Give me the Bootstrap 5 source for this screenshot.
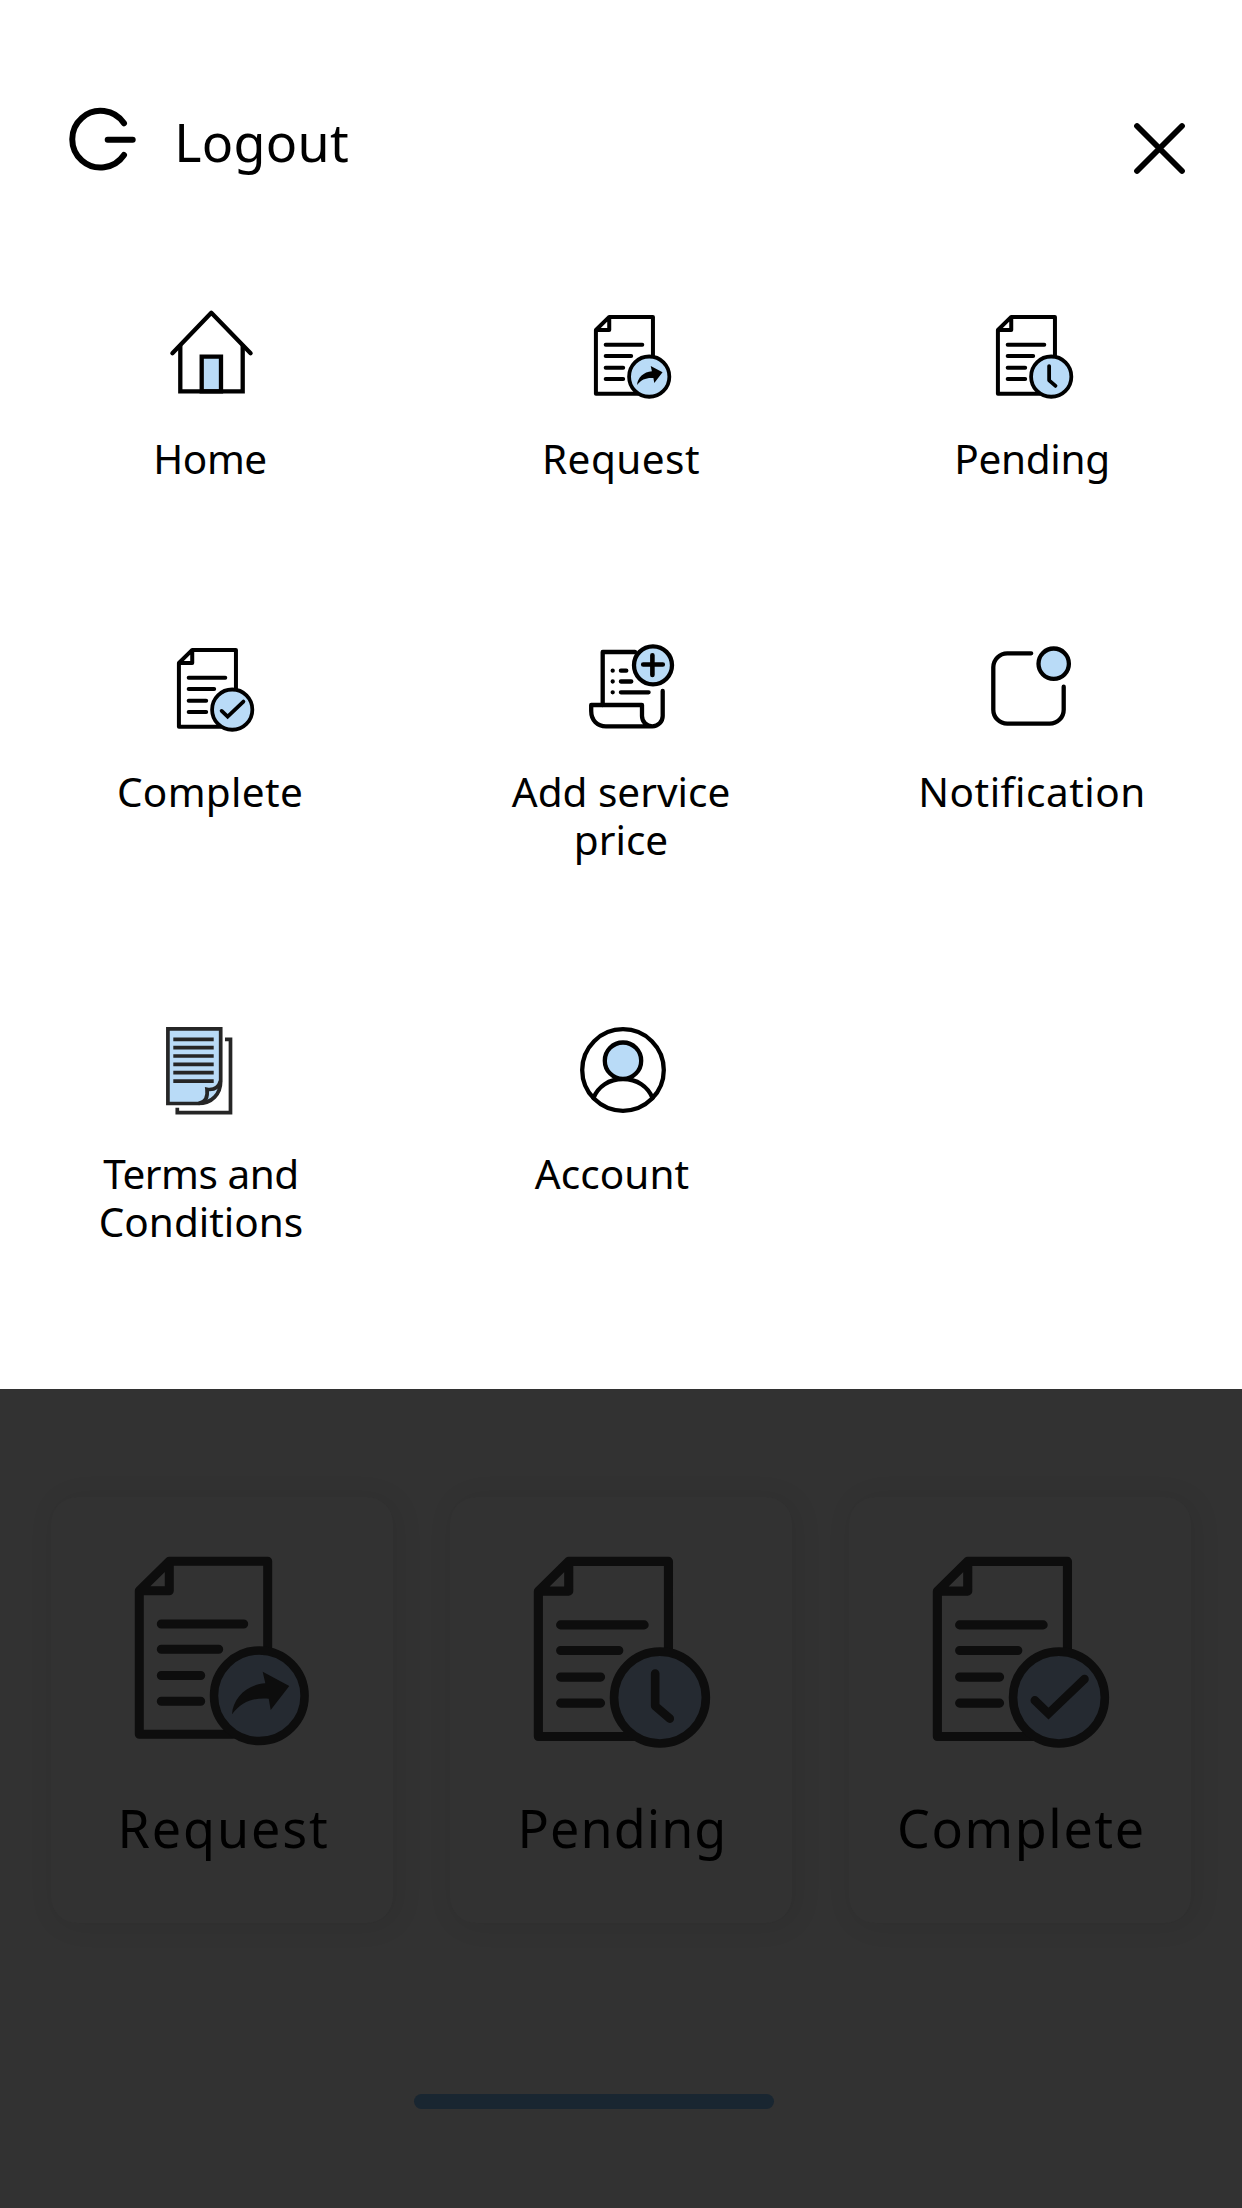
<!DOCTYPE html>
<html lang="en">
<head>
<meta charset="utf-8">
<meta name="viewport" content="width=device-width, initial-scale=1">
<title>Menu</title>
<link rel="stylesheet" href="https://cdn.jsdelivr.net/npm/bootstrap@5.3.0/dist/css/bootstrap.min.css">
<style>
  body { font-family: "Noto Sans", "Open Sans", sans-serif; color: #000; background: #323232; height: 2208px; overflow: hidden; }
  svg { display: block; overflow: visible; fill: none; stroke: #000; stroke-width: 4.3; stroke-linecap: round; stroke-linejoin: round; }
  .tint { fill: #b9dbf7; }

  .menu-panel { height: 1389px; }
  .menu-head { height: 306px; padding: 108px 57px 0 69.5px; }
  .logout-link { gap: 38.7px; color: #000; }
  .logout-text { font-size: 52px; line-height: 60px; margin-top: 3.5px; letter-spacing: .3px; }
  .close-btn { margin-top: 14.7px; }

  .menu-grid { padding: 0 4.5px; }
  .tile { color: #000; }
  .tile-icon { height: 128.7px; }
  .tile-text { font-size: 40.5px; line-height: 48px; margin-bottom: 156.8px; }
  .row-last .tile-text { padding-right: 18px; }
  .i-home { padding: 4.2px 0 0 165.5px; }
  .i-request { padding: 8.7px 0 0 178.5px; }
  .i-pending { padding: 8.7px 0 0 169.5px; }
  .i-complete { padding: 8.7px 0 0 172.5px; }
  .i-service { padding: 4.8px 0 0 173.8px; }
  .i-notify { padding: 6.2px 0 0 164.2px; }
  .i-terms { padding: 6.4px 0 0 161.8px; }
  .i-account { padding: 6.4px 0 0 164.5px; }
  .t-home { letter-spacing: -.4px; }
  .t-request { letter-spacing: .46px; }
  .t-pending { letter-spacing: -.29px; }
  .t-complete { letter-spacing: .32px; }
  .t-notify { letter-spacing: .5px; }
  .t-terms { letter-spacing: -.47px; }
  .t-account { letter-spacing: .11px; }

  .dash { height: 819px; padding: 108px 50px 0 51px; }
  .dash-cards { gap: 56.7px; }
  .dash-card { width: 342.2px; height: 426px; border-radius: 26px; background: #323232; padding-top: 60px; box-shadow: 4px 2px 26px 2px rgba(0,0,0,.08); }
  .dash-icon { height: 241px; padding-left: 84.2px; }
  .dash-icon svg { stroke: #0d0d0d; }
  .dash-icon .tint { fill: #252a31; }
  .dash-text { font-size: 52px; line-height: 60px; padding-left: 3px; }
  .d-req { letter-spacing: 1.9px; }
  .d-pen { letter-spacing: 1.05px; }
  .d-com { letter-spacing: 1.6px; }
  .dash-bar { width: 360px; height: 15px; border-radius: 8px; background: #192631; margin: 171px 0 0 363px; }
</style>
<script src="https://cdn.jsdelivr.net/npm/bootstrap@5.3.0/dist/js/bootstrap.bundle.min.js"></script>
</head>
<body>

<!-- sheet of paper shared by the request, pending and complete icons -->
<svg width="0" height="0" class="position-absolute" aria-hidden="true">
  <symbol id="sheet" viewBox="0 0 174 189" overflow="visible">
    <g stroke-width="9">
      <path d="M98 177.2H4.3V33.7L34.3 4.3H132.7V98M34.3 4.3V33.7H4.3"/>
      <path d="M26.3 67H108.7M26.3 92.3H83.7M26.3 118.5H65.7M26.3 144.2H65.7"/>
    </g>
  </symbol>
</svg>

<nav class="menu-panel bg-white">
  <div class="menu-head d-flex justify-content-between align-items-start">
    <a href="#" class="logout-link d-flex align-items-start text-decoration-none">
      <svg width="66" height="63" viewBox="0 0 66 63"><g stroke-width="6"><path d="M54 15.3A28.3 28.3 0 1 0 54 47"/><path d="M37.7 31.8H62.7"/></g></svg>
      <span class="logout-text">Logout</span>
    </a>
    <a href="#" class="close-btn" aria-label="Close">
      <svg width="51" height="51" viewBox="0 0 51 51"><g stroke-width="5.8"><path d="M3 3L48 48M48 3L3 48"/></g></svg>
    </a>
  </div>

  <div class="menu-grid">
    <div class="row g-0">
      <a href="#" class="tile col-4 text-decoration-none">
        <div class="tile-icon i-home">
          <svg width="83" height="84" viewBox="0 0 83 84"><path class="tint" stroke-linejoin="miter" d="M31.7 81.3V46.7H51V81.3Z"/><path stroke-linejoin="miter" d="M10.3 36V81.3H72.7V36"/><path d="M2.4 43.3L41.3 2.8L80.6 43.3"/></svg>
        </div>
        <div class="tile-text t-home text-center">Home</div>
      </a>
      <a href="#" class="tile col-4 text-decoration-none">
        <div class="tile-icon i-request">
          <svg width="77.3" height="84" viewBox="0 0 174 189"><use href="#sheet" width="174" height="189"/><g stroke-width="8.5"><circle class="tint" cx="124.3" cy="138.7" r="45.3"/></g><path fill="#000" stroke="none" d="M154.3 129L127.7 114.7L130.3 126.3C112 127.5 98 141 97 157.3C107 144.5 118 140.5 133.7 141.7L135.7 153Z"/></svg>
        </div>
        <div class="tile-text t-request text-center">Request</div>
      </a>
      <a href="#" class="tile col-4 text-decoration-none">
        <div class="tile-icon i-pending">
          <svg width="77.3" height="84" viewBox="0 0 174 189"><use href="#sheet" width="174" height="189"/><g stroke-width="8.5"><circle class="tint" cx="124.3" cy="138.7" r="45.3"/><path d="M119.6 115V147L134 159.5"/></g></svg>
        </div>
        <div class="tile-text t-pending text-center">Pending</div>
      </a>
    </div>

    <div class="row g-0">
      <a href="#" class="tile col-4 text-decoration-none">
        <div class="tile-icon i-complete">
          <svg width="77.3" height="84" viewBox="0 0 174 189"><use href="#sheet" width="174" height="189"/><g stroke-width="8.5"><circle class="tint" cx="124.3" cy="138.7" r="45.3"/><path stroke-linejoin="miter" d="M100.5 141.5L114 154.5L149.5 120.5"/></g></svg>
        </div>
        <div class="tile-text t-complete text-center">Complete</div>
      </a>
      <a href="#" class="tile col-4 text-decoration-none">
        <div class="tile-icon i-service">
          <svg width="85.3" height="85" viewBox="0 0 85.3 85"><path d="M46 8H13.7V61"/><path d="M73.7 47V72A10.35 10.35 0 0 1 53 72V61H2.2V67C2.2 76.5 8.5 82.3 17 82.3H63"/><path d="M31.9 26.7H37.3M31.9 37.5H42.3M31.9 48.3H59.6M23.7 26.7h.01M23.7 37.5h.01M23.7 48.3h.01"/><circle class="tint" cx="64" cy="21.3" r="19"/><g stroke-width="4.6"><path d="M54.2 20.5H73.8M63.4 11.3V31"/></g></svg>
        </div>
        <div class="tile-text text-center">Add service<br>price</div>
      </a>
      <a href="#" class="tile col-4 text-decoration-none">
        <div class="tile-icon i-notify">
          <svg width="80.3" height="80.3" viewBox="0 0 80.3 80.3"><path d="M40.2 7.3H16.3A14 14 0 0 0 2.3 21.3V63.7A14 14 0 0 0 16.3 77.7H58.7A14 14 0 0 0 72.7 63.7V40.7"/><circle class="tint" cx="62.7" cy="17.7" r="15.2"/></svg>
        </div>
        <div class="tile-text t-notify text-center">Notification</div>
      </a>
    </div>

    <div class="row g-0 row-last">
      <a href="#" class="tile col-4 text-decoration-none">
        <div class="tile-icon i-terms">
          <svg width="66.3" height="87.7" viewBox="0 0 66.3 87.7"><g stroke="#262626" stroke-width="3.7" stroke-linecap="butt" stroke-linejoin="miter"><path d="M59 12.3H64.5V85.7H11.3V80.7"/><path class="tint" d="M1.9 1.9H54.7V54C54.7 67 46 76.5 32 76.5H1.9Z"/><path d="M54.5 54C52.5 60.5 48 63.3 41 62.3C42 70 39.5 75.5 32.5 76.5"/><path d="M7.3 12.3H47.7M7.3 20.7H47.7M7.3 29H47.7M7.3 37.4H47.7M7.3 45.7H47.7M7.3 54.1H47.7"/></g></svg>
        </div>
        <div class="tile-text text-center"><span class="t-terms">Terms and</span><br>Conditions</div>
      </a>
      <a href="#" class="tile col-4 text-decoration-none">
        <div class="tile-icon i-account">
          <svg width="86" height="86" viewBox="0 0 86 86"><circle cx="43" cy="43" r="40.8"/><path d="M13.5 71C18 59.5 29 52 43 52S68 59.5 72.5 71"/><circle class="tint" cx="43" cy="33.7" r="18.2"/></svg>
        </div>
        <div class="tile-text t-account text-center">Account</div>
      </a>
    </div>
  </div>
</nav>

<main class="dash">
  <div class="dash-cards d-flex">
    <div class="dash-card">
      <div class="dash-icon">
        <svg width="174" height="189" viewBox="0 0 174 189"><use href="#sheet" width="174" height="189"/><g stroke-width="8.5"><circle class="tint" cx="124.3" cy="138.7" r="45.3"/></g><path fill="#0d0d0d" stroke="none" d="M154.3 129L127.7 114.7L130.3 126.3C112 127.5 98 141 97 157.3C107 144.5 118 140.5 133.7 141.7L135.7 153Z"/></svg>
      </div>
      <div class="dash-text d-req text-center">Request</div>
    </div>
    <div class="dash-card">
      <div class="dash-icon">
        <svg width="176.3" height="191.5" viewBox="0 0 174 189"><use href="#sheet" width="174" height="189"/><g stroke-width="8.5"><circle class="tint" cx="124.3" cy="138.7" r="45.3"/><path d="M119.6 115V147L134 159.5"/></g></svg>
      </div>
      <div class="dash-text d-pen text-center">Pending</div>
    </div>
    <div class="dash-card">
      <div class="dash-icon">
        <svg width="176.3" height="191.5" viewBox="0 0 174 189"><use href="#sheet" width="174" height="189"/><g stroke-width="8.5"><circle class="tint" cx="124.3" cy="138.7" r="45.3"/><path stroke-linejoin="miter" d="M100.5 141.5L114 154.5L149.5 120.5"/></g></svg>
      </div>
      <div class="dash-text d-com text-center">Complete</div>
    </div>
  </div>
  <div class="dash-bar"></div>
</main>
</body>
</html>
